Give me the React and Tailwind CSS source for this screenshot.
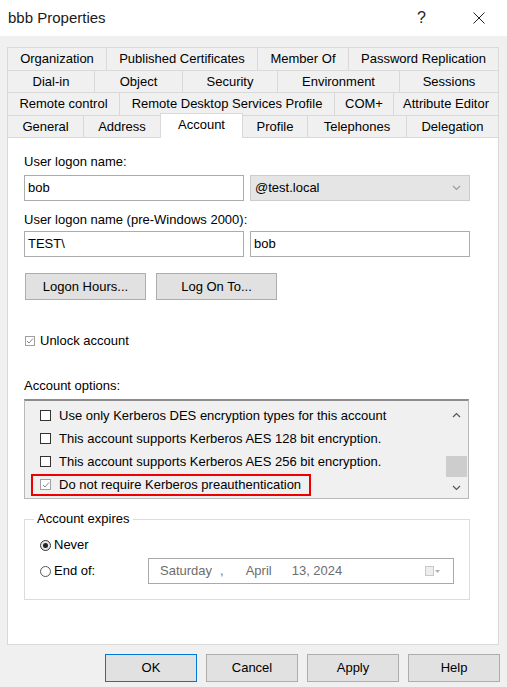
import React from 'react';

const rows = [
  [['Organization', 'w-[99px]'], ['Published Certificates', 'w-[151px]'], ['Member Of', 'w-[91px]'], ['Password Replication', 'flex-1']],
  [['Dial-in', 'w-[87px]'], ['Object', 'w-[88px]'], ['Security', 'w-[95px]'], ['Environment', 'w-[122px]'], ['Sessions', 'flex-1']],
  [['Remote control', 'w-[112px]'], ['Remote Desktop Services Profile', 'w-[215px]'], ['COM+', 'w-[59px]'], ['Attribute Editor', 'flex-1']],
];

const rowHeights = ['h-[23px]', 'h-[22px]', 'h-[23px]'];

function Tab({ label, width, last }) {
  return (
    <div
      className={`${width} h-full flex items-center justify-center border-t border-l border-[#d9d9d9] ${last ? 'border-r' : ''}`}
    >
      {label}
    </div>
  );
}

function Check({ checked, small, gray }) {
  return (
    <span
      className={`${small ? 'w-[10px] h-[10px]' : 'w-[11px] h-[11px]'} inline-flex items-center justify-center border bg-white shrink-0 ${gray ? 'border-[#a0a0a0]' : 'border-[#333333]'}`}
    >
      {checked && (
        <svg width="8" height="8" viewBox="0 0 8 8">
          <polyline points="1,4 3,6 7,1.5" fill="none" stroke={gray ? '#8a8a8a' : '#333'} strokeWidth="1" />
        </svg>
      )}
    </span>
  );
}

function Radio({ checked }) {
  return (
    <span className={`w-[11px] h-[11px] rounded-full border inline-flex items-center justify-center shrink-0 ${checked ? 'border-[#333333] bg-[#e6e6e6]' : 'border-[#555555] bg-white'}`}>
      {checked && <span className="w-[5px] h-[5px] rounded-full bg-[#222222]" />}
    </span>
  );
}

function Chevron({ up, color = '#555' }) {
  return (
    <svg width="9" height="6" viewBox="0 0 9 6">
      <polyline
        points={up ? '1,5 4.5,1.5 8,5' : '1,1 4.5,4.5 8,1'}
        fill="none"
        stroke={color}
        strokeWidth="1.2"
      />
    </svg>
  );
}

const options = [
  'Use only Kerberos DES encryption types for this account',
  'This account supports Kerberos AES 128 bit encryption.',
  'This account supports Kerberos AES 256 bit encryption.',
];

export default function App() {
  return (
    <div className="w-[507px] h-[687px] bg-[#f0f0f0] flex flex-col text-[13px] text-black font-['Liberation_Sans',Arial,sans-serif] leading-4 overflow-hidden">
      {/* title bar */}
      <div className="h-[36px] bg-white flex items-center shrink-0">
        <span className="ml-[8px] text-[15px] text-[#1a1a1a]">bbb Properties</span>
        <span className="ml-auto mr-[47px] text-[16px] text-[#222]">?</span>
        <svg className="mr-[22px]" width="12" height="12" viewBox="0 0 12 12">
          <path d="M0.5 0.5 L11.5 11.5 M11.5 0.5 L0.5 11.5" stroke="#222" strokeWidth="1" />
        </svg>
      </div>

      {/* tabs */}
      <div className="mt-[11px] ml-[7px] w-[492px] flex flex-col">
        {rows.map((row, i) => (
          <div key={i} className={`flex ${rowHeights[i]}`}>
            {row.map(([label, width], j) => (
              <Tab key={label} label={label} width={width} last={j === row.length - 1} />
            ))}
          </div>
        ))}
        <div className="flex h-[22px] items-end">
          <Tab label="General" width="w-[76px]" />
          <Tab label="Address" width="w-[77px]" />
          <div className="w-[83px] h-[25px] relative z-10 -mb-px bg-white border-t border-l border-r border-[#d9d9d9] flex items-center justify-center pb-[3px]">
            Account
          </div>
          <div className="w-[64px] h-full flex items-center justify-center border-t border-[#d9d9d9]">Profile</div>
          <Tab label="Telephones" width="w-[99px]" />
          <Tab label="Delegation" width="flex-1" last />
        </div>
      </div>

      {/* panel */}
      <div className="ml-[7px] w-[492px] h-[508px] bg-white border border-[#d9d9d9] shrink-0 flex flex-col pl-[16px]">
        <div className="mt-[16px]">User logon name:</div>
        <div className="mt-[5px] flex gap-[6px]">
          <div className="w-[220px] h-[26px] border border-[#acacac] flex items-center pl-[3px]">bob</div>
          <div className="w-[220px] h-[26px] border border-[#cccccc] bg-[#e5e5e5] flex items-center pl-[4px] pr-[8px]">
            <span>@test.local</span>
            <span className="ml-auto flex items-center">
              <Chevron color="#9a9a9a" />
            </span>
          </div>
        </div>
        <div className="mt-[11px]">User logon name (pre-Windows 2000):</div>
        <div className="mt-[3px] flex gap-[6px]">
          <div className="w-[220px] h-[26px] border border-[#acacac] flex items-center pl-[3px]">TEST\</div>
          <div className="w-[220px] h-[26px] border border-[#acacac] flex items-center pl-[3px]">bob</div>
        </div>
        <div className="mt-[16px] flex gap-[10px] pl-px">
          <button className="w-[121px] h-[27px] bg-[#e1e1e1] border border-[#adadad]">Logon Hours...</button>
          <button className="w-[121px] h-[27px] bg-[#e1e1e1] border border-[#adadad]">Log On To...</button>
        </div>

        <div className="mt-[33px] flex items-center gap-[5px] pl-px">
          <Check checked small gray />
          <span>Unlock account</span>
        </div>

        <div className="mt-[29px]">Account options:</div>
        <div className="mt-[5px] w-[445px] h-[100px] border border-[#b9b9b9] border-t-2 border-t-[#8c8c8c] bg-[#f0f0f0] flex">
          <div className="flex-1 flex flex-col pt-[3px]">
            {options.map((t) => (
              <div key={t} className="h-[23px] flex items-center pl-[15px] gap-[8px]">
                <Check />
                <span>{t}</span>
              </div>
            ))}
            <div className="h-[23px] flex items-center pl-[6px]">
              <div className="w-[280px] h-[22px] border-2 border-[#ee0000] flex items-center pl-[7px] gap-[8px]">
                <Check checked gray />
                <span>Do not require Kerberos preauthentication</span>
              </div>
            </div>
          </div>
          <div className="w-[21px] mr-px flex flex-col items-center">
            <div className="h-[28px] flex items-center">
              <Chevron up />
            </div>
            <div className="flex-1 w-full flex flex-col justify-end">
              <div className="h-[21px] w-full bg-[#cdcdcd] mb-px" />
            </div>
            <div className="h-[20px] flex items-center">
              <Chevron />
            </div>
          </div>
        </div>

        <fieldset className="mt-[12px] w-[446px] h-[89px] border border-[#dcdcdc] pl-[9px] pr-[15px]">
          <legend className="px-[3px]">Account expires</legend>
          <div className="mt-[10px] flex items-center gap-[3px] pl-[6px]">
            <Radio checked />
            <span>Never</span>
          </div>
          <div className="mt-[5px] flex items-center pl-[6px]">
            <Radio />
            <span className="ml-[3px]">End of:</span>
            <div className="ml-auto w-[306px] h-[26px] border border-[#a9a9a9] flex items-center text-[#6d6d6d]">
              <span className="ml-[11px]">Saturday</span>
              <span className="ml-[8px]">,</span>
              <span className="ml-[22px]">April</span>
              <span className="ml-[20px]">13, 2024</span>
              <span className="ml-auto mr-[13px] flex items-center gap-px">
                <span className="w-[9px] h-[10px] border border-[#c8c8c8] bg-[#eeeeee]" />
                <svg width="5" height="3" viewBox="0 0 5 3">
                  <polygon points="0,0 5,0 2.5,3" fill="#b0b0b0" />
                </svg>
              </span>
            </div>
          </div>
        </fieldset>
      </div>

      {/* buttons */}
      <div className="mt-[9px] ml-[105px] flex gap-[9px]">
        <button className="w-[92px] h-[28px] bg-[#e1e1e1] border border-[#0078d7]">OK</button>
        <button className="w-[92px] h-[28px] bg-[#e1e1e1] border border-[#adadad]">Cancel</button>
        <button className="w-[92px] h-[28px] bg-[#e1e1e1] border border-[#adadad]">Apply</button>
        <button className="w-[92px] h-[28px] bg-[#e1e1e1] border border-[#adadad]">Help</button>
      </div>
    </div>
  );
}
